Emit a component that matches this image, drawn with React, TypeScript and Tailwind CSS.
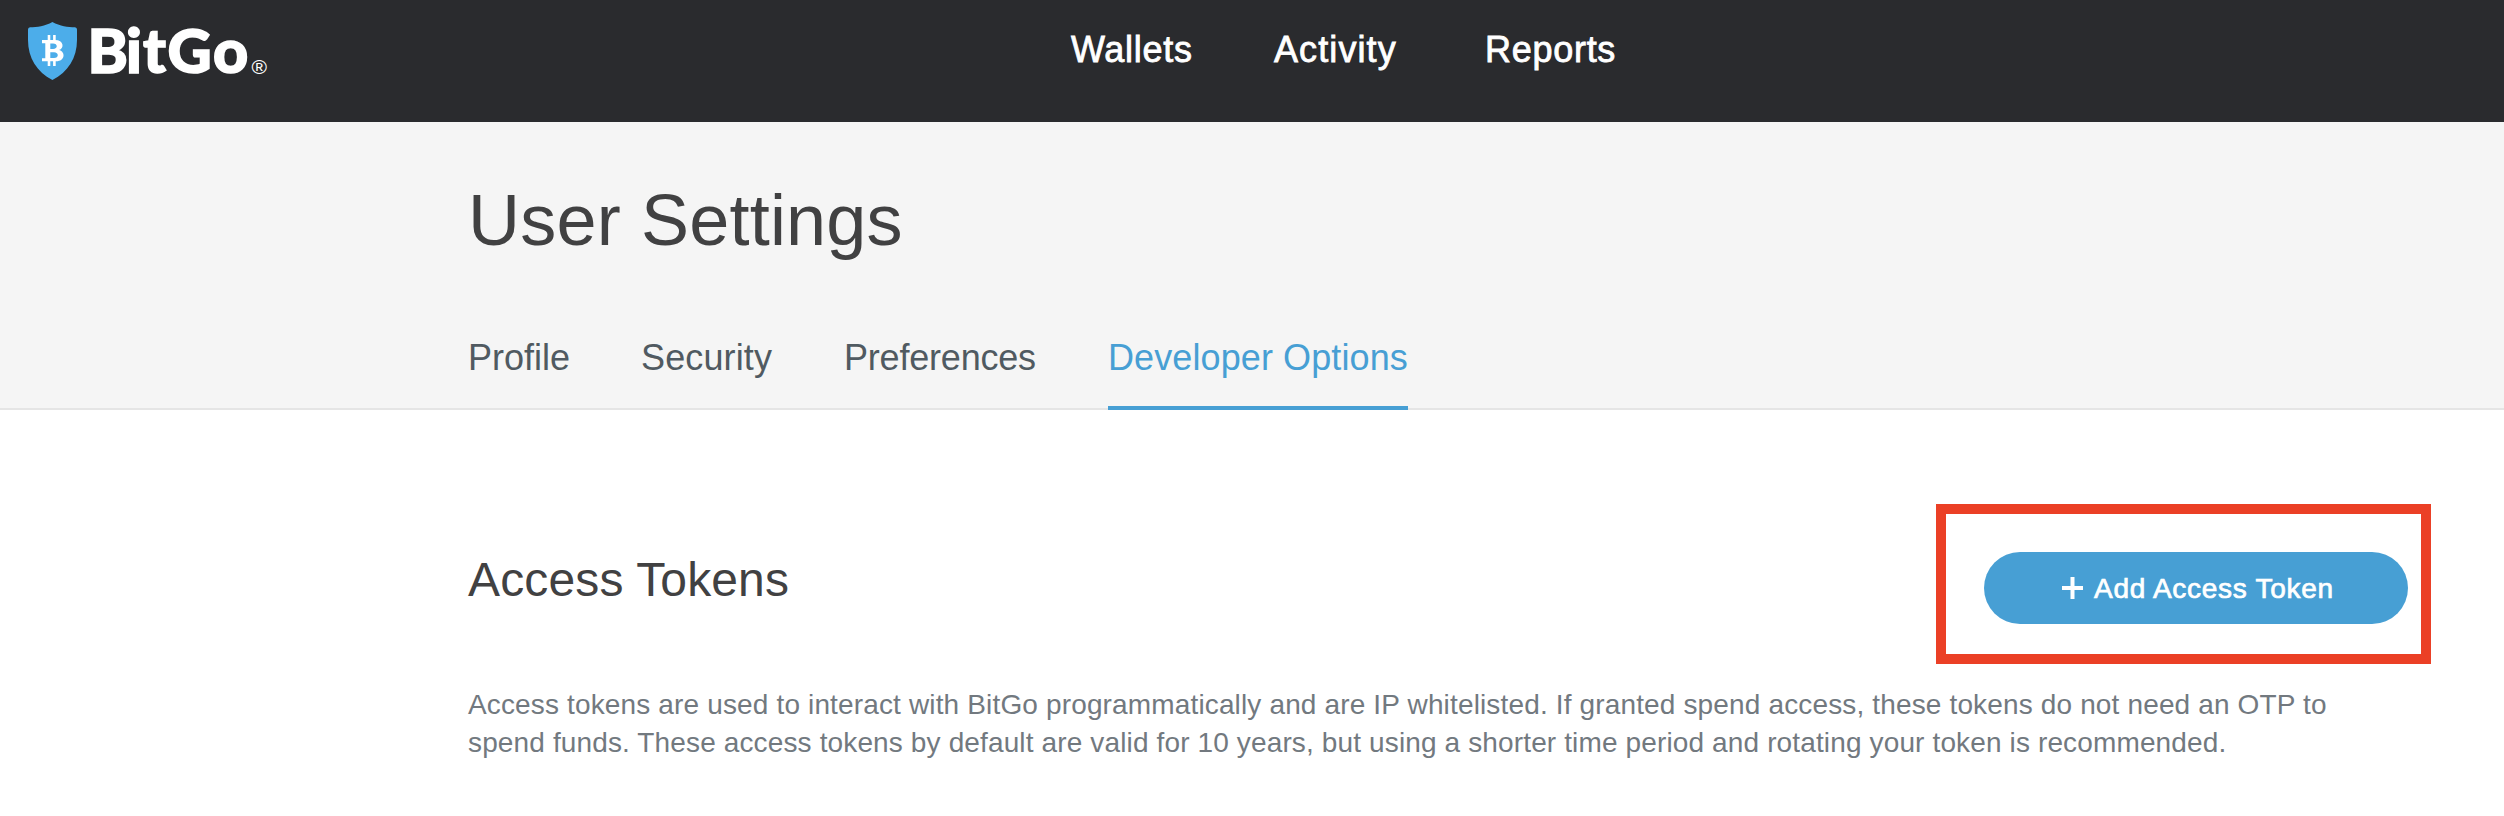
const navItems = [
  { label: "Wallets", className: "w-[203px] tracking-[0.02em]" },
  { label: "Activity", className: "w-[211px] tracking-[1.1px]" },
  { label: "Reports", className: "tracking-[0.02em]" },
];

const tabs = [
  { label: "Profile", className: "w-[101px]" },
  { label: "Security", className: "w-[131px] tracking-[0.13px]" },
  { label: "Preferences", className: "w-[192px] tracking-[-0.2px]" },
  { label: "Developer Options", className: "w-[300px] tracking-[0.1px]", active: true },
];

function Logo() {
  return (
    <svg width="300" height="122" viewBox="0 0 300 122" aria-label="BitGo" className="shrink-0">
      <path
        d="M52.4 22C45 26 37 27.3 30 27.3Q28 27.5 28 29.5V40C28 58 37 72 52.4 80C68 72 77 58 77 40V29.5Q77 27.5 75 27.3C68 27.3 60 26 52.4 22Z"
        fill="#4cadea"
      />
      <path d="M49 35V41M54.4 35V41M49 60V66M54.4 60V66" stroke="#fff" strokeWidth="2.6" />
      <path
        d="M42 40H55C64 40 64.5 48.5 59 50C65.5 51.5 65.5 61.3 56 61.3H42V58.3H45.3V43.2H42ZM50.3 43.6H53C58 43.6 58 49 53 49H50.3ZM50.3 52.2H54C59 52.2 59 58 54 58H50.3Z"
        fill="#fff"
        fillRule="evenodd"
      />
      <text
        y="73"
        x="87.6 125.9 143.1 167.5 213"
        fill="#fff"
        stroke="#fff"
        strokeWidth="1.6"
        className="font-['Lato',sans-serif] text-[61px] font-black"
      >
        BitGo
      </text>
      <text x="251.5" y="74" fill="#fff" className="font-['Liberation_Sans',sans-serif] text-[21px]">
        ®
      </text>
    </svg>
  );
}

export default function App() {
  return (
    <div className="h-[816px] w-[2504px] overflow-hidden bg-white font-['Liberation_Sans',Arial,sans-serif]">
      <header className="flex h-[122px] bg-[#2a2b2e]">
        <Logo />
        <nav className="flex pl-[771px] pt-[29px] text-[36px] leading-[42px] text-white [-webkit-text-stroke:0.8px_white]">
          {navItems.map((item) => (
            <a key={item.label} className={item.className}>
              {item.label}
            </a>
          ))}
        </nav>
      </header>

      <section className="flex h-[288px] flex-col border-b-2 border-[#e5e5e5] bg-[#f5f5f5] pl-[468px]">
        <h1 className="pt-[58px] text-[72px] leading-[80px] tracking-[0.2px] text-[#414142]">User Settings</h1>
        <nav className="mt-[77px] flex h-[73px] shrink-0 gap-[72px] whitespace-nowrap text-[36px] leading-[42px] text-[#505a61]">
          {tabs.map((tab) => (
            <a
              key={tab.label}
              className={`${tab.className} ${tab.active ? "border-b-4 border-[#479fd4] text-[#479fd4]" : ""}`}
            >
              {tab.label}
            </a>
          ))}
        </nav>
      </section>

      <main className="pl-[468px] pt-[94px]">
        <div className="flex h-[160px] w-[1963px] items-start justify-between">
          <h2 className="pt-[48px] text-[48px] leading-[56px] tracking-[0.14px] text-[#414142]">Access Tokens</h2>
          <div className="h-[160px] w-[495px] border-[10px] border-[#eb4026] pl-[38px] pt-[38px]">
            <button className="flex h-[72px] w-[424px] items-center rounded-full bg-[#479fd4] pl-[78px] text-white">
              <svg width="21" height="22" viewBox="0 0 21 22" stroke="#fff" strokeWidth="4">
                <path d="M0 11H21M10.5 0V22" />
              </svg>
              <span className="ml-[11px] whitespace-nowrap pt-px text-[28px] leading-[32px] tracking-[0.72px] [-webkit-text-stroke:0.7px_white]">
                Add Access Token
              </span>
            </button>
          </div>
        </div>
        <p className="mt-[22px] whitespace-nowrap text-[28px] leading-[38px] text-[#72797f]">
          <span className="block tracking-[0.148px]">
            Access tokens are used to interact with BitGo programmatically and are IP whitelisted. If granted spend
            access, these tokens do not need an OTP to
          </span>
          <span className="block tracking-[0.135px]">
            spend funds. These access tokens by default are valid for 10 years, but using a shorter time period and
            rotating your token is recommended.
          </span>
        </p>
      </main>
    </div>
  );
}
